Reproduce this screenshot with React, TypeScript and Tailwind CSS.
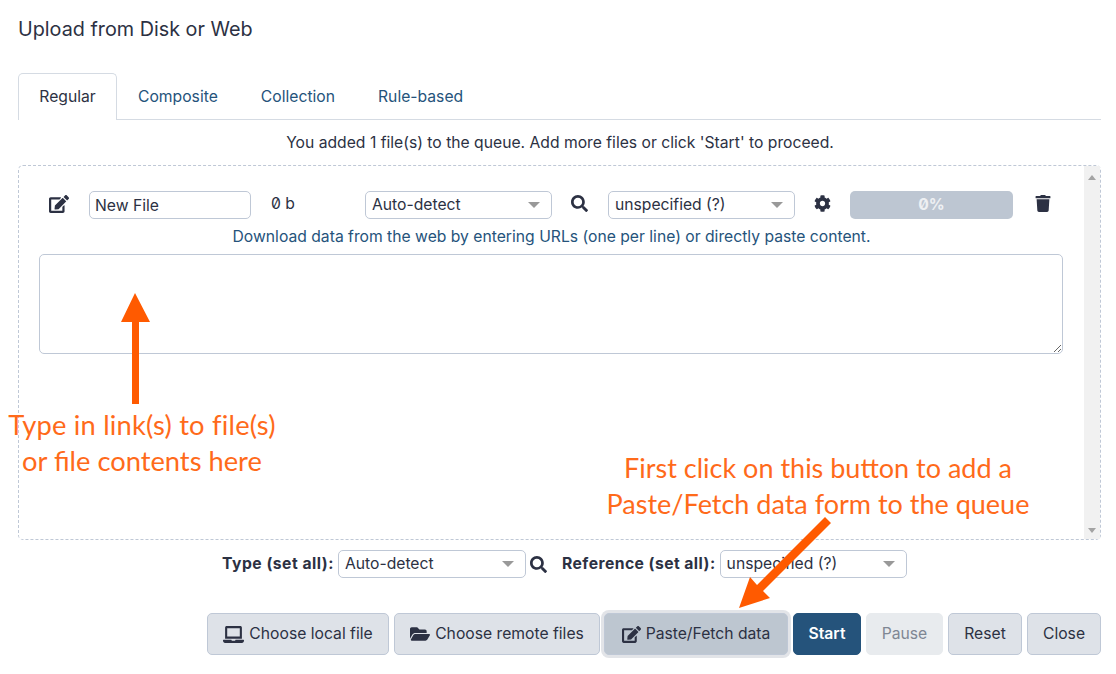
import type { ReactNode } from "react";
import { FaCog, FaEdit, FaFolderOpen, FaLaptop, FaSearch, FaTrash } from "react-icons/fa";

const tabs = ["Composite", "Collection", "Rule-based"];

function Select({ label, className }: { label: string; className: string }) {
  return (
    <div
      className={`relative flex h-[28px] shrink-0 items-center rounded-[5px] border border-[#bfc8d6] bg-white pb-[1px] pl-[6px] text-[#2c3143] ${className}`}
    >
      <span>{label}</span>
      <span className="absolute right-[11px] top-[10px] h-0 w-0 border-x-[6px] border-t-[6px] border-x-transparent border-t-[#999999]" />
    </div>
  );
}

function Button({ icon, label, className }: { icon?: ReactNode; label: string; className: string }) {
  return (
    <button
      className={`flex h-[42px] items-center justify-center gap-[5px] rounded-[5px] border ${className}`}
    >
      {icon}
      {label}
    </button>
  );
}

const grayBtn = "border-[#bfc8d6] bg-[#dee2e8] text-[#2c3143]";

export default function App() {
  return (
    <div
      className="relative h-[674px] w-[1116px] overflow-hidden bg-white pl-[18px] pr-[15px] text-[15.7px] text-[#2c3143]"
      style={{ fontFamily: "Inter, sans-serif" }}
    >
      <h1 className="pt-[17px] text-[19.8px] leading-[24px]">Upload from Disk or Web</h1>

      <div className="mt-[32px] flex h-[47px] border-b border-[#d5dbe3]">
        <div className="flex h-[47px] w-[99px] items-center justify-center rounded-t-[5px] border border-b-0 border-[#d5dbe3] bg-white">
          Regular
        </div>
        <div className="ml-[21px] flex items-center gap-[43px] pt-[1px] text-[#25537b]">
          {tabs.map((t) => (
            <span key={t}>{t}</span>
          ))}
        </div>
      </div>

      <p className="mt-[11px] h-[34px] pl-[1px] text-center leading-[23px]">
        You added 1 file(s) to the queue. Add more files or click 'Start' to proceed.
      </p>

      <div className="flex h-[375px] rounded-[5px] border border-dashed border-[#bfc8d6]">
        <div className="flex-1 pl-[20px] pr-[20px] pt-[25px]">
          <div className="flex h-[28px] items-center">
            <div className="flex w-[50px] justify-start pl-[10px]">
              <FaEdit className="mb-[3px] h-[20px] w-[20px]" />
            </div>
            <div className="flex h-[28px] w-[162px] items-center rounded-[5px] border border-[#bfc8d6] pl-[5px] pt-[1px]">
              New File
            </div>
            <span className="ml-[20px] w-[94px] pb-[2px]" style={{ fontFeatureSettings: '"zero"' }}>
              0 b
            </span>
            <Select label="Auto-detect" className="w-[187px]" />
            <div className="flex w-[56px] justify-center pb-[3px] pr-[1px]">
              <FaSearch className="h-[17px] w-[17px]" />
            </div>
            <Select label="unspecified (?)" className="w-[187px]" />
            <div className="flex w-[55px] justify-center pb-[3px]">
              <FaCog className="h-[17px] w-[17px]" />
            </div>
            <div
              className="flex h-[28px] w-[163px] items-center justify-center rounded-[5px] bg-[#bdc6d2] font-bold text-[#eef0f3]"
              style={{ fontFeatureSettings: '"zero"' }}
            >
              0%
            </div>
            <div className="flex w-[50px] justify-start pb-[3px] pl-[22px]">
              <FaTrash className="h-[17px] w-[16px]" />
            </div>
          </div>
          <p className="mt-[6px] h-[23px] text-center leading-[23px] text-[#25537b]">
            Download data from the web by entering URLs (one per line) or directly paste content.
          </p>
          <textarea className="mt-[6px] block h-[100px] w-[1024px] rounded-[5px] border border-[#bfc8d6] bg-white" />
        </div>
        <div className="relative h-full w-[16px] shrink-0 bg-[#f1f1f1]">
          <span className="absolute left-[4px] top-[9px] h-0 w-0 border-x-[4px] border-b-[5px] border-x-transparent border-b-[#a3a3a3]" />
          <span className="absolute bottom-[6px] left-[4px] h-0 w-0 border-x-[4px] border-t-[5px] border-x-transparent border-t-[#a3a3a3]" />
        </div>
      </div>

      <div className="mt-[10px] flex h-[28px] items-center pl-[204px]">
        <b className="mr-[4px] font-bold tracking-[0.5px]">Type (set all):</b>
        <Select label="Auto-detect" className="w-[188px]" />
        <FaSearch className="ml-[4px] h-[17px] w-[17px]" />
        <b className="ml-[15px] mr-[4px] font-bold tracking-[0.45px]">Reference (set all):</b>
        <Select label="unspecified (?)" className="w-[187px]" />
      </div>

      <div className="mt-[35px] flex justify-end gap-[5px]">
        <Button icon={<FaLaptop className="h-[17px] w-[21px]" />} label="Choose local file" className={`w-[182px] ${grayBtn}`} />
        <Button icon={<FaFolderOpen className="h-[18px] w-[20px]" />} label="Choose remote files" className={`w-[206px] ${grayBtn}`} />
        <Button
          icon={<FaEdit className="h-[19px] w-[19px]" />}
          label="Paste/Fetch data"
          className="-ml-[1px] w-[184px] border-[#bfc8d6] bg-[#bdc6d0] text-[#2c3143] shadow-[0_0_0_3px_#e2e4e8]"
        />
        <Button label="Start" className="w-[68px] border-[#25537b] bg-[#25537b] font-semibold text-white" />
        <Button label="Pause" className="w-[77px] border-[#e8ebee] bg-[#e8ebee] text-[#7f8794]" />
        <Button label="Reset" className={`w-[74px] ${grayBtn}`} />
        <Button label="Close" className={`w-[74px] ${grayBtn}`} />
      </div>

      {/* annotations painted over the form */}
      <svg className="pointer-events-none absolute left-0 top-0" width="1116" height="674">
        <polygon points="135,293 150,322 139,322 139,404 132,404 132,322 121,322" fill="#ff5a00" />
        <polygon points="825,517 831,523 763,591 770,598 739,608 750,577 757,585" fill="#ff5a00" />
      </svg>
      <div
        className="absolute left-[-8px] top-[407px] w-[300px] text-center text-[27.3px] leading-[36px] text-[#ff6a1a]"
        style={{ fontFamily: "Lato, sans-serif" }}
      >
        <span className="tracking-[0.2px]">Type in link(s) to file(s)</span>
        <br />
        or file contents here
      </div>
      <div
        className="absolute left-[568px] top-[450px] w-[500px] text-center text-[27px] leading-[36px] text-[#ff6a1a]"
        style={{ fontFamily: "Lato, sans-serif" }}
      >
        First click on this button to add a
        <br />
        Paste/Fetch data form to the queue
      </div>
    </div>
  );
}
